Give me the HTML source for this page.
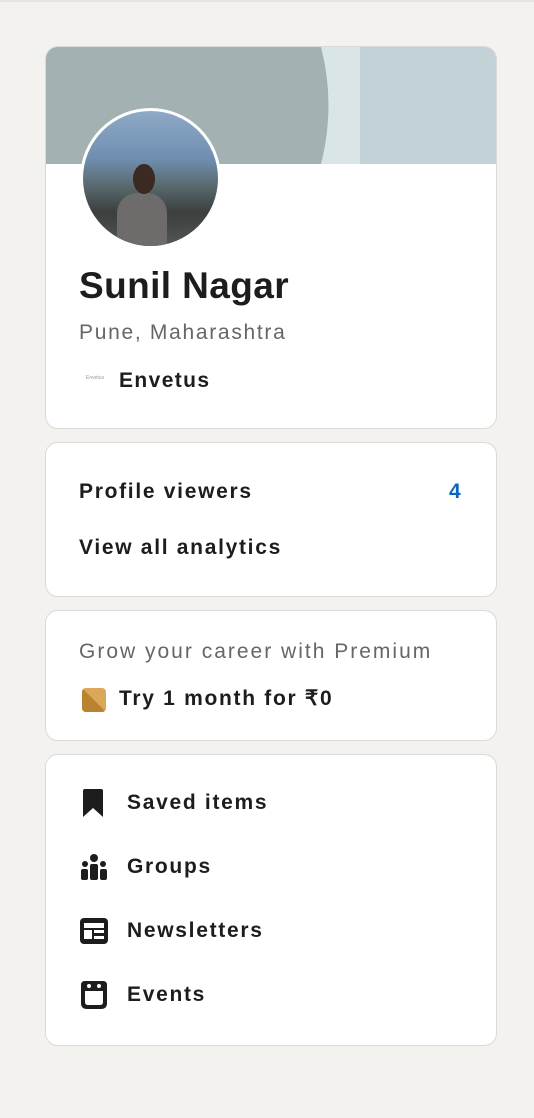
<!DOCTYPE html>
<html><head><meta charset="utf-8"><style>
*{margin:0;padding:0;box-sizing:border-box}
body{width:534px;height:1118px;background:#f4f2ee;font-family:"Liberation Sans",sans-serif;position:relative;overflow:hidden}
.card{position:absolute;left:45px;width:452px;background:#fff;border:1.5px solid #dcdad6;border-radius:13px;overflow:hidden}
.t{position:absolute;white-space:nowrap;line-height:1;letter-spacing:1.7px}
.b{font-weight:bold;color:#1d1d1d}
.g{color:#666}
</style></head><body>
<div style="position:absolute;left:0;top:0;width:534px;height:2px;background:#e6e4e0"></div>
<div class="card" style="top:46px;height:383px">
  <svg style="position:absolute;left:0;top:0" width="452" height="117">
    <rect width="452" height="117" fill="#c3d2d6"/>
    <rect width="314" height="117" fill="#dae5e7"/>
    <path d="M0 0H275Q290 58 275 117H0Z" fill="#a3b1b2"/>
  </svg>
  <div style="position:absolute;left:34px;top:61px;width:141px;height:141px;border-radius:50%;background:#fff;padding:3px">
    <div style="width:100%;height:100%;border-radius:50%;background:linear-gradient(180deg,#8fa9c6 0%,#6f8fb0 35%,#5a6b70 55%,#3b3f3e 75%,#555 100%);position:relative;overflow:hidden">
      <div style="position:absolute;left:34px;top:82px;width:50px;height:70px;border-radius:20px 20px 0 0;background:#6d6c6a"></div>
      <div style="position:absolute;left:50px;top:53px;width:22px;height:30px;border-radius:50%;background:#3a2a22"></div>
    </div>
  </div>
  <div class="t b" style="left:33px;top:220px;font-size:37px;letter-spacing:0.4px">Sunil Nagar</div>
  <div class="t g" style="left:33px;top:275px;font-size:21px">Pune, Maharashtra</div>
  <div class="t" style="left:40px;top:329px;font-size:5px;color:#999;letter-spacing:0">Envetus</div>
  <div class="t b" style="left:73px;top:323px;font-size:21px;letter-spacing:1.4px">Envetus</div>
</div>
<div class="card" style="top:442px;height:155px">
  <div class="t b" style="left:33px;top:38px;font-size:21px">Profile viewers</div>
  <div class="t" style="left:403px;top:38px;font-size:21px;font-weight:bold;color:#0a66c2">4</div>
  <div class="t b" style="left:33px;top:94px;font-size:21px">View all analytics</div>
</div>
<div class="card" style="top:610px;height:131px">
  <div class="t g" style="left:33px;top:30px;font-size:21px;letter-spacing:2px">Grow your career with Premium</div>
  <svg style="position:absolute;left:36px;top:77px" width="24" height="24"><defs><clipPath id="c"><rect width="24" height="24" rx="4"/></clipPath></defs><g clip-path="url(#c)"><rect width="24" height="24" fill="#dba859"/><path d="M0 0L24 24H0Z" fill="#b9832f"/></g></svg>
  <div class="t b" style="left:73px;top:77px;font-size:21px">Try 1 month for ₹0</div>
</div>
<div class="card" style="top:754px;height:292px">
  <svg style="position:absolute;left:37px;top:34px" width="20" height="28"><path d="M0 2Q0 0 2 0H18Q20 0 20 2V28L10 19L0 28Z" fill="#1d1d1d"/></svg>
  <div class="t b" style="left:81px;top:37px;font-size:21px">Saved items</div>
  <svg style="position:absolute;left:35px;top:99px" width="26" height="26"><circle cx="13" cy="4" r="4" fill="#1d1d1d"/><circle cx="4" cy="10" r="3" fill="#1d1d1d"/><circle cx="22" cy="10" r="3" fill="#1d1d1d"/><rect x="9" y="10" width="8" height="16" rx="2" fill="#1d1d1d"/><rect x="0" y="15" width="7" height="11" rx="2" fill="#1d1d1d"/><rect x="19" y="15" width="7" height="11" rx="2" fill="#1d1d1d"/></svg>
  <div class="t b" style="left:81px;top:101px;font-size:21px">Groups</div>
  <svg style="position:absolute;left:34px;top:163px" width="28" height="26"><rect x="0" y="0" width="28" height="26" rx="4" fill="#1d1d1d"/><rect x="4" y="5" width="20" height="5" fill="#fff"/><rect x="4" y="12" width="8" height="9" fill="#fff"/><rect x="14" y="12" width="10" height="3" fill="#fff"/><rect x="14" y="18" width="10" height="3" fill="#fff"/></svg>
  <div class="t b" style="left:81px;top:165px;font-size:21px">Newsletters</div>
  <svg style="position:absolute;left:35px;top:226px" width="26" height="28"><path d="M0 4Q0 0 4 0H22Q26 0 26 4V22Q26 28 20 28H6Q0 28 0 22Z" fill="#1d1d1d"/><path d="M4 10H22V21Q22 24 19 24H7Q4 24 4 21Z" fill="#fff"/><circle cx="8" cy="5" r="2" fill="#fff"/><circle cx="18" cy="5" r="2" fill="#fff"/></svg>
  <div class="t b" style="left:81px;top:229px;font-size:21px">Events</div>
</div>
</body></html>
